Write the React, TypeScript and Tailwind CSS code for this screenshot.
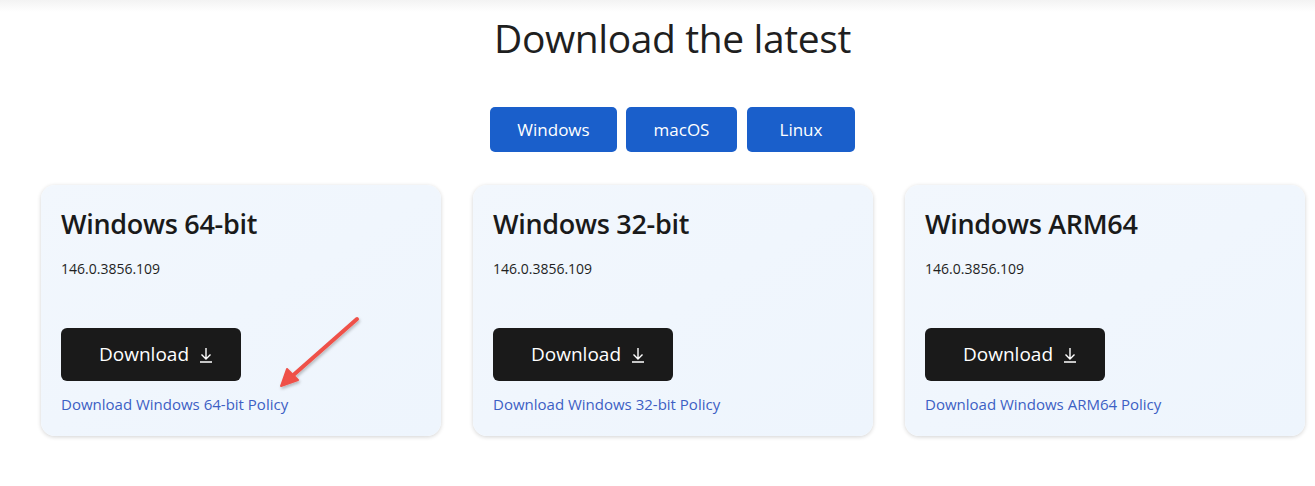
const cards = [
  { title: "Windows 64-bit", link: "Download Windows 64-bit Policy" },
  { title: "Windows 32-bit", link: "Download Windows 32-bit Policy" },
  { title: "Windows ARM64", link: "Download Windows ARM64 Policy" },
];

function DownloadIcon() {
  return (
    <svg width="14" height="16" viewBox="0 0 14 16" fill="none" stroke="currentColor" strokeWidth="1.4" className="ml-[10px]">
      <path d="M7 1v11M2.5 7.5 7 12l4.5-4.5M1 15h12" />
    </svg>
  );
}

function PointerArrow() {
  return (
    <svg className="pointer-events-none absolute left-[270px] top-[306px]" width="100" height="90" viewBox="0 0 100 90">
      <defs>
        <filter id="sh" x="-20%" y="-20%" width="140%" height="140%">
          <feDropShadow dx="1" dy="2" stdDeviation="1.5" floodColor="#000" floodOpacity="0.25" />
        </filter>
      </defs>
      <g filter="url(#sh)">
        <path d="M87 13 L20 72" stroke="#ef5148" strokeWidth="4" strokeLinecap="round" />
        <path d="M11 80 L17 63 L28 74 Z" fill="#ef5148" stroke="#ef5148" strokeWidth="2" strokeLinejoin="round" />
      </g>
    </svg>
  );
}

export default function App() {
  return (
    <div className="relative min-h-[486px] w-[1315px] bg-white font-['Open_Sans',sans-serif] text-[#1f1f1f]">
      <div className="h-3 bg-gradient-to-b from-[#f3f3f3] to-white" />
      <div className="pl-[30px]">
        <h1 className="mt-[2px] text-center text-[39px] font-normal leading-[48px] tracking-[-0.4px] text-[#1f1f1f]">Download the latest</h1>
        <div className="mt-[45px] flex justify-center gap-[9px]">
          <button className="h-[45px] w-[127px] rounded-[5px] bg-[#1a5fcb] text-[17px] text-white">Windows</button>
          <button className="h-[45px] w-[111px] rounded-[5px] bg-[#1a5fcb] text-[17px] text-white">macOS</button>
          <button className="ml-[1px] h-[45px] w-[108px] rounded-[5px] bg-[#1a5fcb] text-[17px] text-white">Linux</button>
        </div>
      </div>
      <div className="mt-[33px] flex gap-8 pl-[41px]">
        {cards.map((c) => (
          <div
            key={c.title}
            className="flex h-[251px] w-[400px] flex-col rounded-[14px] bg-gradient-to-br from-[#f2f7fd] to-[#eef5fd] px-5 pt-[21px] shadow-[0_1px_4px_rgba(0,0,0,0.18)]"
          >
            <h2 className="text-[27px] font-semibold leading-9 tracking-[-0.3px] text-[#1a1a1a]">{c.title}</h2>
            <p className="mt-[17px] text-[14px] leading-5 text-[#1f1f1f]">146.0.3856.109</p>
            <button className="mt-[49px] flex h-[53px] w-[180px] items-center justify-center rounded-[6px] bg-[#1a1a1a] pl-[10px] text-[19px] text-white">
              Download
              <DownloadIcon />
            </button>
            <a href="#" className="mt-[11px] text-[15px] leading-6 text-[#3d5fc4]">
              {c.link}
            </a>
          </div>
        ))}
      </div>
      <PointerArrow />
    </div>
  );
}
